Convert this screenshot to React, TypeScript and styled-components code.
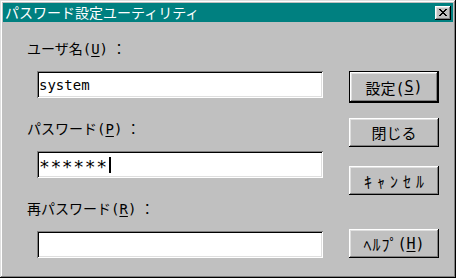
import styled, { createGlobalStyle } from 'styled-components'

const GlobalStyle = createGlobalStyle`
  html, body {
    margin: 0;
    padding: 0;
    background: #c0c0c0;
  }
  body {
    font-family: "DejaVu Sans Mono", "Noto Sans CJK JP", monospace;
    color: #000;
  }
`

// win95 bevels
const raised = `
  box-shadow: inset -1px -1px #000, inset 1px 1px #fff, inset -2px -2px #808080,
    inset 2px 2px #dfdfdf;
`
const sunken = `
  box-shadow: inset 1px 1px #808080, inset -1px -1px #fff, inset 2px 2px #000,
    inset -2px -2px #dfdfdf;
`

function CloseIcon() {
  // 8x7 pixel cross
  const rows = ['11000011', '01100110', '00111100', '00011000', '00111100', '01100110', '11000011']
  return (
    <svg width="8" height="7" viewBox="0 0 8 7" shapeRendering="crispEdges">
      {rows.map((r, y) =>
        r.split('').map((c, x) => (c === '1' ? <rect key={`${x}-${y}`} x={x} y={y} width="1" height="1" fill="#000" /> : null))
      )}
    </svg>
  )
}

export default function App() {
  return (
    <>
      <GlobalStyle />
      <Window>
        <TitleBar>
          <Title>パスワード設定ユーティリティ</Title>
          <CloseButton aria-label="閉じる">
            <CloseIcon />
          </CloseButton>
        </TitleBar>
        <Body>
          <Fields>
            <Field>
              <Label>
                ユーザ名(<Key>U</Key>)<Colon>：</Colon>
              </Label>
              <TextBox>system</TextBox>
            </Field>
            <Field>
              <Label>
                パスワード(<Key>P</Key>)<Colon>：</Colon>
              </Label>
              <TextBox>
                <Masked>******</Masked>
                <Caret />
              </TextBox>
            </Field>
            <Field>
              <Label>
                再パスワード(<Key>R</Key>)<Colon>：</Colon>
              </Label>
              <TextBox />
            </Field>
          </Fields>
          <Buttons>
            <Button $default>
              設定(<Key>S</Key>)
            </Button>
            <Button>閉じる</Button>
            <Button $space={19}>
              <Kana $spread={5}>ｷｬﾝｾﾙ</Kana>
            </Button>
            <Button $push>
              <Kana $spread={1}>ﾍﾙﾌﾟ</Kana>(<Key>H</Key>)
            </Button>
          </Buttons>
        </Body>
      </Window>
    </>
  )
}

const Window = styled.div`
  width: 456px;
  height: 278px;
  box-sizing: border-box;
  padding: 3px;
  background: #c0c0c0;
  display: flex;
  flex-direction: column;
  box-shadow: inset -1px -1px #000, inset 1px 1px #dfdfdf, inset -2px -2px #808080,
    inset 2px 2px #fff;
`
const TitleBar = styled.div`
  height: 19px;
  background: #008080;
  display: flex;
  align-items: center;
  justify-content: space-between;
  padding: 0 2px;
`
const Title = styled.span`
  color: #fff;
  font-family: "Noto Sans CJK JP", sans-serif;
  font-size: 14px;
  line-height: 19px;
  white-space: nowrap;
`
const CloseButton = styled.div`
  width: 16px;
  height: 14px;
  background: #c0c0c0;
  display: flex;
  align-items: center;
  justify-content: center;
  ${raised}
`
const Body = styled.div`
  display: flex;
  padding: 18px 14px 0 24px;
`
const Fields = styled.div`
  width: 296px;
  display: flex;
  flex-direction: column;
  gap: 22px;
`
const Field = styled.div`
  display: flex;
  flex-direction: column;
`
const Label = styled.div`
  font-size: 14px;
  line-height: 18px;
  height: 18px;
  margin-bottom: 13px;
  white-space: pre;
`
const Colon = styled.span`
  margin-left: 4px;
`
const Key = styled.span`
  text-decoration: underline;
  text-underline-offset: 2px;
`
const TextBox = styled.div`
  margin-left: 10px;
  width: 286px;
  height: 27px;
  box-sizing: border-box;
  padding: 0 2px;
  background: #fff;
  display: flex;
  align-items: center;
  font-size: 14px;
  ${sunken}
`
const Masked = styled.span`
  font-size: 18px;
  letter-spacing: 0.6px;
  padding-top: 4px;
`
const Caret = styled.span`
  display: inline-block;
  width: 2px;
  height: 16px;
  margin-left: 1px;
  background: #000;
`
const Buttons = styled.div`
  width: 90px;
  margin-left: 26px;
  padding-top: 31px;
  display: flex;
  flex-direction: column;
`
const Button = styled.div<{ $default?: boolean; $space?: number; $push?: boolean }>`
  height: ${p => (p.$default ? 32 : 29)}px;
  box-sizing: border-box;
  margin-top: ${p => (p.$push ? 'auto' : `${p.$space ?? 0}px`)};
  margin-bottom: ${p => (p.$default ? 15 : 0)}px;
  border: ${p => (p.$default ? '1px solid #000' : 'none')};
  background: #c0c0c0;
  display: flex;
  align-items: center;
  justify-content: center;
  font-size: 15px;
  white-space: nowrap;
  ${raised}
`
const Kana = styled.span<{ $spread?: number }>`
  font-family: "Noto Sans CJK JP", sans-serif;
  font-size: 16px;
  letter-spacing: ${p => p.$spread ?? 0}px;
  margin-right: ${p => -(p.$spread ?? 0)}px;
`
